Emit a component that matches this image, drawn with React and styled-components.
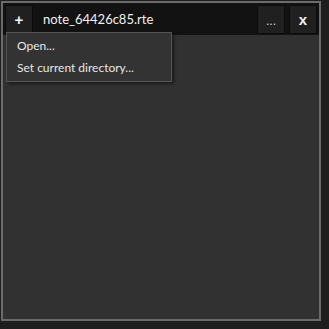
import React from "react";
import styled, { createGlobalStyle } from "styled-components";

const GlobalStyle = createGlobalStyle`
  html, body {
    margin: 0;
    padding: 0;
    background: #1e1e1e;
    font-family: Lato, "Noto Sans", sans-serif;
  }
`;

const App = () => {
  return (
    <>
      <GlobalStyle />
      <Frame>
        <TopBar>
          <BarButton $bold>+</BarButton>
          <FileName>note_64426c85.rte</FileName>
          <BarButton $dots>...</BarButton>
          <BarButton $bold>x</BarButton>
        </TopBar>
        <Editor />
        <Menu>
          <MenuItem>Open...</MenuItem>
          <MenuItem>Set current directory...</MenuItem>
        </Menu>
      </Frame>
    </>
  );
};

const Frame = styled.div`
  position: relative;
  margin: 1px;
  width: 320px;
  height: 320px;
  box-sizing: border-box;
  border: 2px solid #6b6b6b;
  background: #313131;
  display: flex;
  flex-direction: column;
`;

const TopBar = styled.div`
  display: flex;
  align-items: center;
  gap: 4px;
  height: 32px;
  padding: 0 2px;
  background: #121212;
`;

const BarButton = styled.div`
  width: 28px;
  height: 29px;
  box-sizing: border-box;
  border: 1px solid #0c0c0c;
  background: #202020;
  color: ${(p) => (p.$dots ? "#dcdcdc" : "#f2f2f2")};
  font-family: "Liberation Sans", Arial, sans-serif;
  font-size: ${(p) => (p.$dots ? "12px" : "15px")};
  font-weight: ${(p) => (p.$bold ? 700 : 400)};
  display: flex;
  align-items: center;
  justify-content: center;
  padding-top: ${(p) => (p.$dots ? "3px" : "0")};
`;

const FileName = styled.div`
  flex: 1;
  padding-left: 6px;
  color: #f0f0f0;
  font-size: 13px;
`;

const Editor = styled.div`
  flex: 1;
`;

const Menu = styled.div`
  position: absolute;
  left: 3px;
  top: 29px;
  width: 166px;
  box-sizing: border-box;
  padding: 2px 0;
  background: #333333;
  border: 1px solid #555555;
  box-shadow: 2px 2px 3px rgba(0, 0, 0, 0.45);
`;

const MenuItem = styled.div`
  height: 22px;
  line-height: 22px;
  padding-left: 10px;
  color: #e6e6e6;
  font-size: 12px;
`;

export default App;
